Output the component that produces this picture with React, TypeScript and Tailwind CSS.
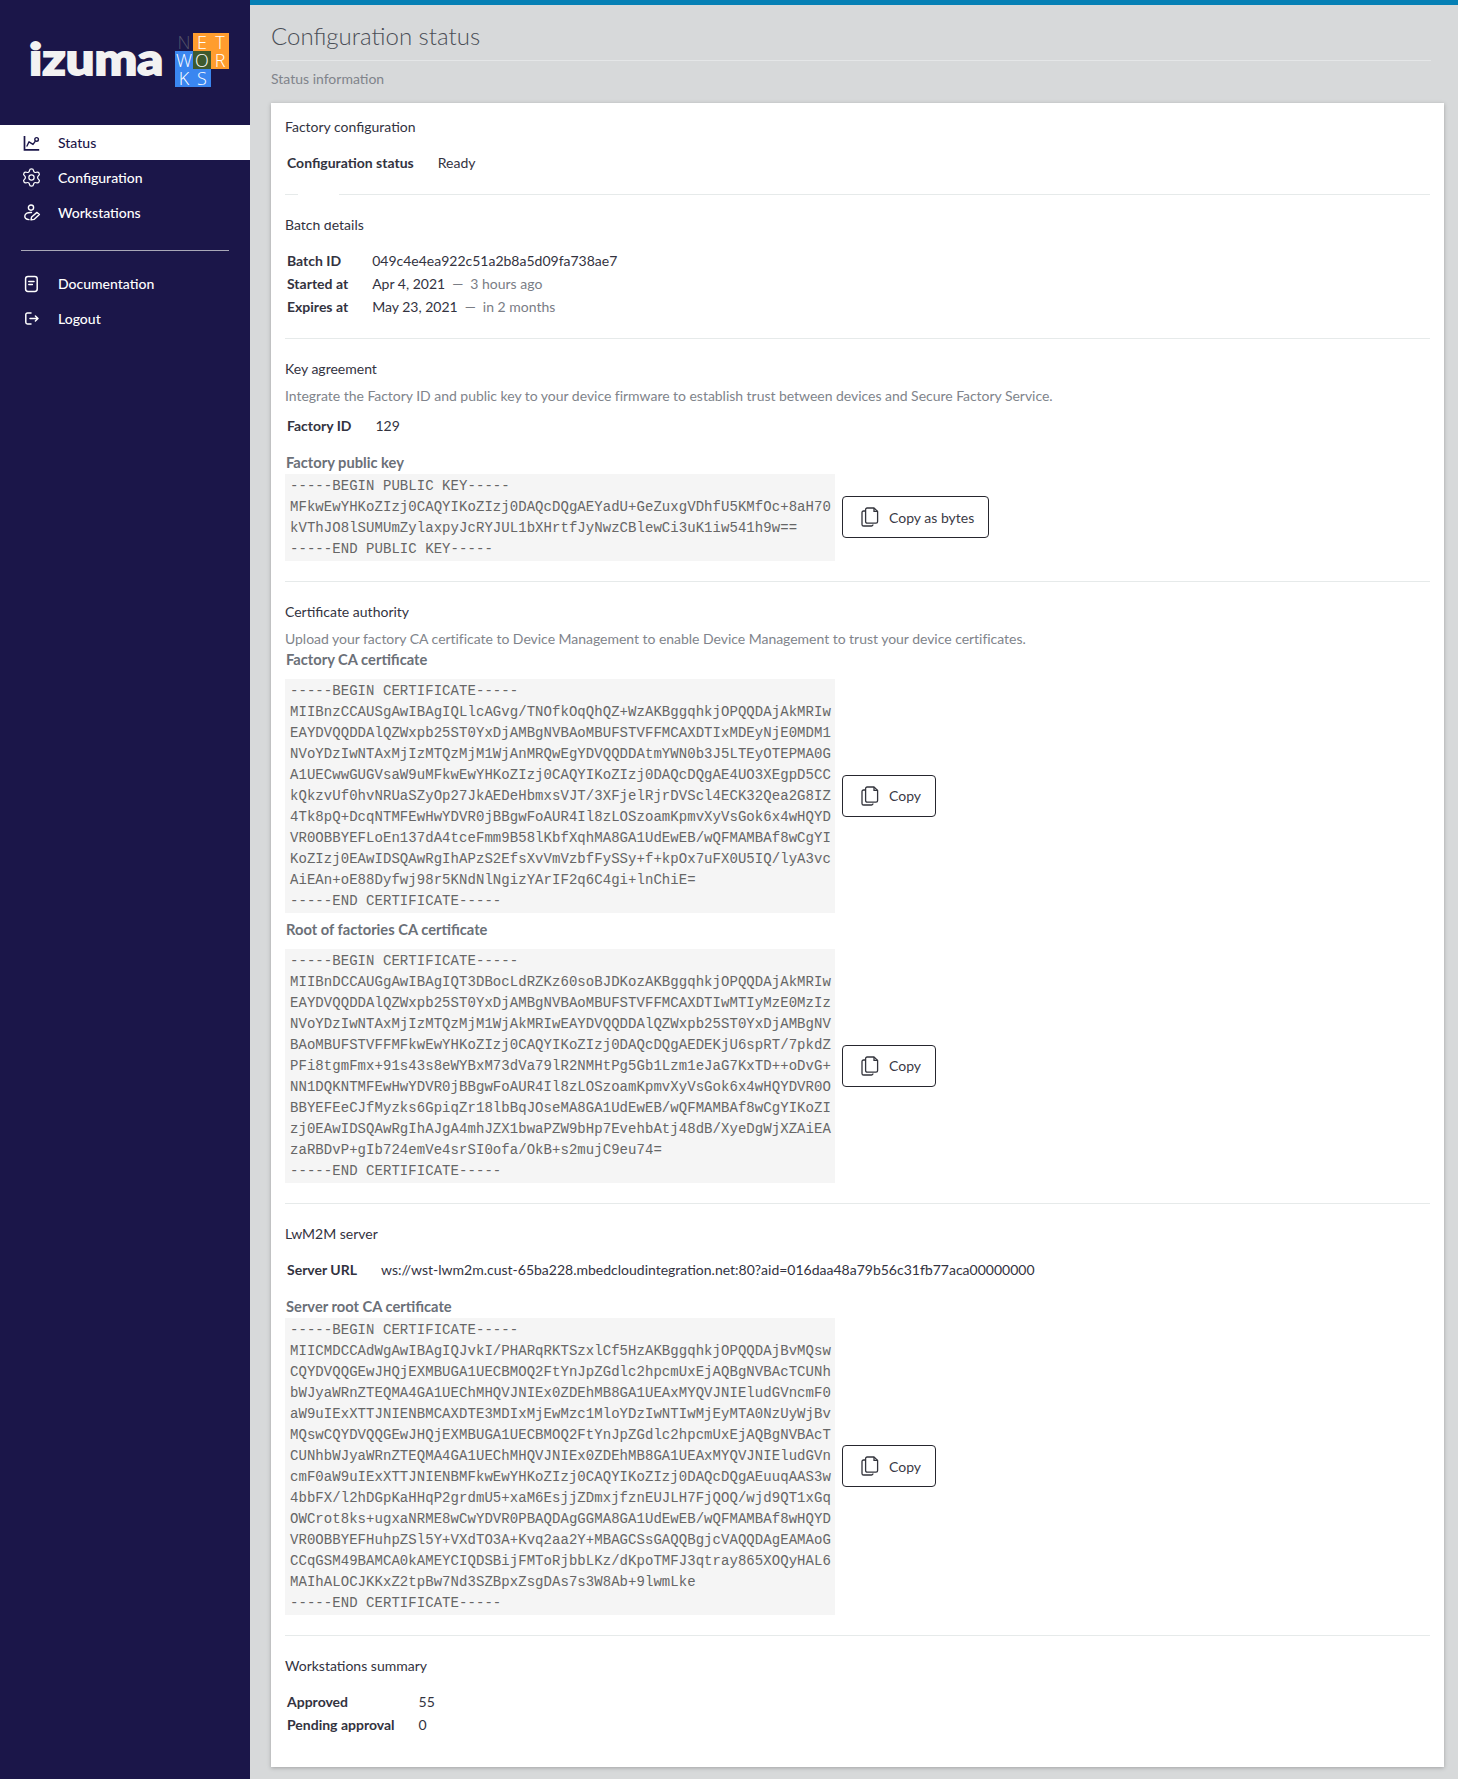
import React from 'react'
import { Settings } from 'lucide-react'

const publicKey = `-----BEGIN PUBLIC KEY-----
MFkwEwYHKoZIzj0CAQYIKoZIzj0DAQcDQgAEYadU+GeZuxgVDhfU5KMfOc+8aH70
kVThJO8lSUMUmZylaxpyJcRYJUL1bXHrtfJyNwzCBlewCi3uK1iw541h9w==
-----END PUBLIC KEY-----`

const factoryCa = `-----BEGIN CERTIFICATE-----
MIIBnzCCAUSgAwIBAgIQLlcAGvg/TNOfkOqQhQZ+WzAKBggqhkjOPQQDAjAkMRIw
EAYDVQQDDAlQZWxpb25ST0YxDjAMBgNVBAoMBUFSTVFFMCAXDTIxMDEyNjE0MDM1
NVoYDzIwNTAxMjIzMTQzMjM1WjAnMRQwEgYDVQQDDAtmYWN0b3J5LTEyOTEPMA0G
A1UECwwGUGVsaW9uMFkwEwYHKoZIzj0CAQYIKoZIzj0DAQcDQgAE4UO3XEgpD5CC
kQkzvUf0hvNRUaSZyOp27JkAEDeHbmxsVJT/3XFjelRjrDVScl4ECK32Qea2G8IZ
4Tk8pQ+DcqNTMFEwHwYDVR0jBBgwFoAUR4Il8zLOSzoamKpmvXyVsGok6x4wHQYD
VR0OBBYEFLoEn137dA4tceFmm9B58lKbfXqhMA8GA1UdEwEB/wQFMAMBAf8wCgYI
KoZIzj0EAwIDSQAwRgIhAPzS2EfsXvVmVzbfFySSy+f+kpOx7uFX0U5IQ/lyA3vc
AiEAn+oE88Dyfwj98r5KNdNlNgizYArIF2q6C4gi+lnChiE=
-----END CERTIFICATE-----`

const rootCa = `-----BEGIN CERTIFICATE-----
MIIBnDCCAUGgAwIBAgIQT3DBocLdRZKz60soBJDKozAKBggqhkjOPQQDAjAkMRIw
EAYDVQQDDAlQZWxpb25ST0YxDjAMBgNVBAoMBUFSTVFFMCAXDTIwMTIyMzE0MzIz
NVoYDzIwNTAxMjIzMTQzMjM1WjAkMRIwEAYDVQQDDAlQZWxpb25ST0YxDjAMBgNV
BAoMBUFSTVFFMFkwEwYHKoZIzj0CAQYIKoZIzj0DAQcDQgAEDEKjU6spRT/7pkdZ
PFi8tgmFmx+91s43s8eWYBxM73dVa79lR2NMHtPg5Gb1Lzm1eJaG7KxTD++oDvG+
NN1DQKNTMFEwHwYDVR0jBBgwFoAUR4Il8zLOSzoamKpmvXyVsGok6x4wHQYDVR0O
BBYEFEeCJfMyzks6GpiqZr18lbBqJOseMA8GA1UdEwEB/wQFMAMBAf8wCgYIKoZI
zj0EAwIDSQAwRgIhAJgA4mhJZX1bwaPZW9bHp7EvehbAtj48dB/XyeDgWjXZAiEA
zaRBDvP+gIb724emVe4srSI0ofa/OkB+s2mujC9eu74=
-----END CERTIFICATE-----`

const serverCa = `-----BEGIN CERTIFICATE-----
MIICMDCCAdWgAwIBAgIQJvkI/PHARqRKTSzxlCf5HzAKBggqhkjOPQQDAjBvMQsw
CQYDVQQGEwJHQjEXMBUGA1UECBMOQ2FtYnJpZGdlc2hpcmUxEjAQBgNVBAcTCUNh
bWJyaWRnZTEQMA4GA1UEChMHQVJNIEx0ZDEhMB8GA1UEAxMYQVJNIEludGVncmF0
aW9uIExXTTJNIENBMCAXDTE3MDIxMjEwMzc1MloYDzIwNTIwMjEyMTA0NzUyWjBv
MQswCQYDVQQGEwJHQjEXMBUGA1UECBMOQ2FtYnJpZGdlc2hpcmUxEjAQBgNVBAcT
CUNhbWJyaWRnZTEQMA4GA1UEChMHQVJNIEx0ZDEhMB8GA1UEAxMYQVJNIEludGVn
cmF0aW9uIExXTTJNIENBMFkwEwYHKoZIzj0CAQYIKoZIzj0DAQcDQgAEuuqAAS3w
4bbFX/l2hDGpKaHHqP2grdmU5+xaM6EsjjZDmxjfznEUJLH7FjQOQ/wjd9QT1xGq
OWCrot8ks+ugxaNRME8wCwYDVR0PBAQDAgGGMA8GA1UdEwEB/wQFMAMBAf8wHQYD
VR0OBBYEFHuhpZSl5Y+VXdTO3A+Kvq2aa2Y+MBAGCSsGAQQBgjcVAQQDAgEAMAoG
CCqGSM49BAMCA0kAMEYCIQDSBijFMToRjbbLKz/dKpoTMFJ3qtray865XOQyHAL6
MAIhALOCJKKxZ2tpBw7Nd3SZBpxZsgDAs7s3W8Ab+9lwmLke
-----END CERTIFICATE-----`

function ChartIcon() {
  return (
    <svg width="18" height="18" viewBox="0 0 18 18" fill="none" stroke="currentColor" strokeWidth="1.4">
      <path d="M1.5 2V15.8H16.2" strokeWidth="1.7" />
      <path d="M4 12L6 7.8L10 10.4L12 7.6" strokeLinecap="round" strokeLinejoin="round" />
      <circle cx="13.6" cy="5.4" r="1.8" />
    </svg>
  )
}

function WorkstationIcon() {
  return (
    <svg width="18" height="18" viewBox="0 0 18 18" fill="none" stroke="currentColor" strokeWidth="1.4">
      <circle cx="8" cy="3.6" r="2.6" />
      <path d="M8.5 8.5C5 8.2 2 9.4 1.8 12C1.7 14 3 15.4 6 15.6" strokeLinecap="round" />
      <path d="M8 15.9L8.6 13L14 8.4L16.4 10.6L11 15.4Z" strokeLinejoin="round" />
    </svg>
  )
}

function DocIcon() {
  return (
    <svg width="18" height="18" viewBox="0 0 18 18" fill="none" stroke="currentColor" strokeWidth="1.5">
      <rect x="2.6" y="1.4" width="11.6" height="15" rx="2.4" />
      <path d="M5.8 6.4H11M5.8 9.6H9.4" strokeLinecap="round" />
    </svg>
  )
}

function LogoutIcon() {
  return (
    <svg width="18" height="18" viewBox="0 0 18 18" fill="none" stroke="currentColor" strokeWidth="1.5">
      <path d="M8 3H4.5C3.5 3 2.8 3.7 2.8 4.7V12.3C2.8 13.3 3.5 14 4.5 14H8" strokeLinecap="round" />
      <path d="M7 8.5H15M12.4 6L15 8.5L12.4 11" strokeLinecap="round" strokeLinejoin="round" />
    </svg>
  )
}

function CopyIcon() {
  return (
    <svg width="18" height="20" viewBox="0 0 18 20" fill="none" stroke="#33343c" strokeWidth="1.3">
      <path d="M4.5 4H2.6C1.6 4 1 4.6 1 5.6V17.4C1 18.4 1.6 19 2.6 19H10.5C11.5 19 12 18.4 12 17.6" />
      <path d="M6.2 1H13L16.6 4.4V14.6C16.6 15.6 16 16.2 15 16.2H6.2C5.2 16.2 4.6 15.6 4.6 14.6V2.6C4.6 1.6 5.2 1 6.2 1Z" strokeLinejoin="round" />
      <path d="M13 1V4.4H16.6" />
    </svg>
  )
}

function NavItem({ label, icon, active }: { label: string; icon: React.ReactNode; active?: boolean }) {
  return (
    <div className={active ? 'flex h-[35px] items-center bg-white pl-[23px] text-[#1b1649]' : 'flex h-[35px] items-center pl-[23px] text-white'}>
      <span className="flex w-[35px] shrink-0 items-center">{icon}</span>
      <span className="text-[14px] font-medium">{label}</span>
    </div>
  )
}

function NetworksLogo() {
  const cell = 'flex h-[18px] w-[18px] items-center justify-center text-[18px] leading-[18px] font-light'
  return (
    <div className="grid grid-cols-[18px_18px_18px] font-['Open_Sans',sans-serif]">
      <span className={`${cell} text-[#55556a]`}>N</span>
      <span className={`${cell} bg-[#ff9d2e] text-white`}>E</span>
      <span className={`${cell} bg-[#ff9d2e] text-white`}>T</span>
      <span className={`${cell} bg-[#3a86f0] text-white`}>W</span>
      <span className={`${cell} bg-[#3e5a2e] text-white`}>O</span>
      <span className={`${cell} bg-[#ff9d2e] text-white`}>R</span>
      <span className={`${cell} bg-[#3a86f0] text-white`}>K</span>
      <span className={`${cell} bg-[#3a86f0] text-white`}>S</span>
    </div>
  )
}

function Sidebar() {
  return (
    <aside className="w-[250px] shrink-0 bg-[#1b1649]">
      <div className="flex h-[125px] items-start pt-[33px] pl-[29px]">
        <div className="mt-[1px] w-[146px] shrink-0 text-[43px] leading-[50px] font-black text-[#f2f2f2]">
          <span className="inline-block origin-left scale-x-[1.18] [-webkit-text-stroke:1.8px_#f2f2f2]">izuma</span>
        </div>
        <NetworksLogo />
      </div>
      <NavItem active label="Status" icon={<ChartIcon />} />
      <NavItem label="Configuration" icon={<Settings size={21} strokeWidth={1.4} className="-ml-[2px]" />} />
      <NavItem label="Workstations" icon={<WorkstationIcon />} />
      <div className="mx-[21px] mt-[20px] mb-[15px] border-t border-[#a9a8b8]" />
      <NavItem label="Documentation" icon={<DocIcon />} />
      <NavItem label="Logout" icon={<LogoutIcon />} />
    </aside>
  )
}

function CopyButton({ label }: { label: string }) {
  return (
    <button className="mb-px flex h-[42px] items-center gap-[10px] rounded-[4px] border border-[#26262e] bg-white pr-[14px] pl-[18px] text-[14px] text-[#3a3a46]">
      <CopyIcon />
      <span>{label}</span>
    </button>
  )
}

function CertBlock({ text, button }: { text: string; button: string }) {
  return (
    <div className="flex items-center gap-[7px]">
      <pre className="w-[550px] shrink-0 bg-[#f5f5f5] px-[5px] py-[1.5px] font-['Liberation_Mono',monospace] text-[14px] leading-[21px] tracking-[0.05px] text-[#666]">{text}</pre>
      <CopyButton label={button} />
    </div>
  )
}

function FieldLabel({ children, className }: { children: React.ReactNode; className?: string }) {
  return <div className={`pl-px text-[14.7px] leading-[20px] font-bold text-[#6b7078] ${className || ''}`}>{children}</div>
}

function Heading({ children }: { children: React.ReactNode }) {
  return <h3 className="text-[14px] leading-[20px] text-[#33333f]">{children}</h3>
}

function InfoTable({ rows, className }: { rows: [string, React.ReactNode][]; className?: string }) {
  return (
    <div className={`grid w-max grid-cols-[auto_auto] gap-x-[24px] pl-[2px] text-[14px] leading-[23px] text-[#33333f] ${className || ''}`}>
      {rows.map(([k, v]) => (
        <React.Fragment key={k}>
          <span className="font-bold">{k}</span>
          <span>{v}</span>
        </React.Fragment>
      ))}
    </div>
  )
}

function Relative({ date, ago }: { date: string; ago: string }) {
  return (
    <span>
      {date}
      <span className="ml-[7px] text-[#7a7d85]">—</span>
      <span className="ml-[7px] text-[#7a7d85]">{ago}</span>
    </span>
  )
}

export default function App() {
  return (
    <div className="flex min-h-[1779px] bg-[#d7d9da] font-['Lato',sans-serif]">
      <Sidebar />
      <main className="min-w-0 flex-1 border-t-[5px] border-[#0580b5] pr-[14px] pl-[21px]">
        <div className="mr-[13px] border-b border-[#e4e6e7] pt-[15px] pb-[9px]">
          <h1 className="text-[24px] leading-[31px] font-light text-[#4a4e56]">Configuration status</h1>
        </div>
        <div className="pt-[8px] pb-[15px] text-[14px] leading-[19px] text-[#80848b]">Status information</div>

        <div className="bg-white px-[14px] pt-[14px] pb-[31px] shadow-[0_1px_4px_rgba(0,0,0,0.25)]">
          <section className="border-b border-[#e6eaea] pb-[20px]">
            <Heading>Factory configuration</Heading>
            <InfoTable className="mt-[14px]" rows={[['Configuration status', 'Ready']]} />
          </section>

          <section className="relative border-b border-[#e6eaea] pt-[20px] pb-[20px]">
            <div className="absolute top-[-2px] left-[13px] h-[29px] w-[41px] bg-white" />
            <Heading>Batch details</Heading>
            <InfoTable
              className="mt-[14px]"
              rows={[
                ['Batch ID', '049c4e4ea922c51a2b8a5d09fa738ae7'],
                ['Started at', <Relative date="Apr 4, 2021" ago="3 hours ago" />],
                ['Expires at', <Relative date="May 23, 2021" ago="in 2 months" />],
              ]}
            />
          </section>

          <section className="border-b border-[#e6eaea] pt-[20px] pb-[20px]">
            <Heading>Key agreement</Heading>
            <p className="mt-[7px] text-[14px] leading-[20px] tracking-[-0.03px] text-[#80848b]">
              Integrate the Factory ID and public key to your device firmware to establish trust between devices and Secure Factory Service.
            </p>
            <InfoTable className="mt-[8px]" rows={[['Factory ID', '129']]} />
            <FieldLabel className="mt-[15px]">Factory public key</FieldLabel>
            <div className="mt-[2px]">
              <CertBlock text={publicKey} button="Copy as bytes" />
            </div>
          </section>

          <section className="border-b border-[#e6eaea] pt-[20px] pb-[20px]">
            <Heading>Certificate authority</Heading>
            <p className="mt-[7px] text-[14px] leading-[20px] tracking-[-0.03px] text-[#80848b]">
              Upload your factory CA certificate to Device Management to enable Device Management to trust your device certificates.
            </p>
            <FieldLabel>Factory CA certificate</FieldLabel>
            <div className="mt-[10px]">
              <CertBlock text={factoryCa} button="Copy" />
            </div>
            <FieldLabel className="mt-[6px]">Root of factories CA certificate</FieldLabel>
            <div className="mt-[10px]">
              <CertBlock text={rootCa} button="Copy" />
            </div>
          </section>

          <section className="border-b border-[#e6eaea] pt-[20px] pb-[20px]">
            <Heading>LwM2M server</Heading>
            <InfoTable className="mt-[14px]" rows={[['Server URL', 'ws://wst-lwm2m.cust-65ba228.mbedcloudintegration.net:80?aid=016daa48a79b56c31fb77aca00000000']]} />
            <FieldLabel className="mt-[15px]">Server root CA certificate</FieldLabel>
            <div className="mt-[2px]">
              <CertBlock text={serverCa} button="Copy" />
            </div>
          </section>

          <section className="pt-[20px]">
            <Heading>Workstations summary</Heading>
            <InfoTable
              className="mt-[14px]"
              rows={[
                ['Approved', '55'],
                ['Pending approval', '0'],
              ]}
            />
          </section>
        </div>
      </main>
    </div>
  )
}
